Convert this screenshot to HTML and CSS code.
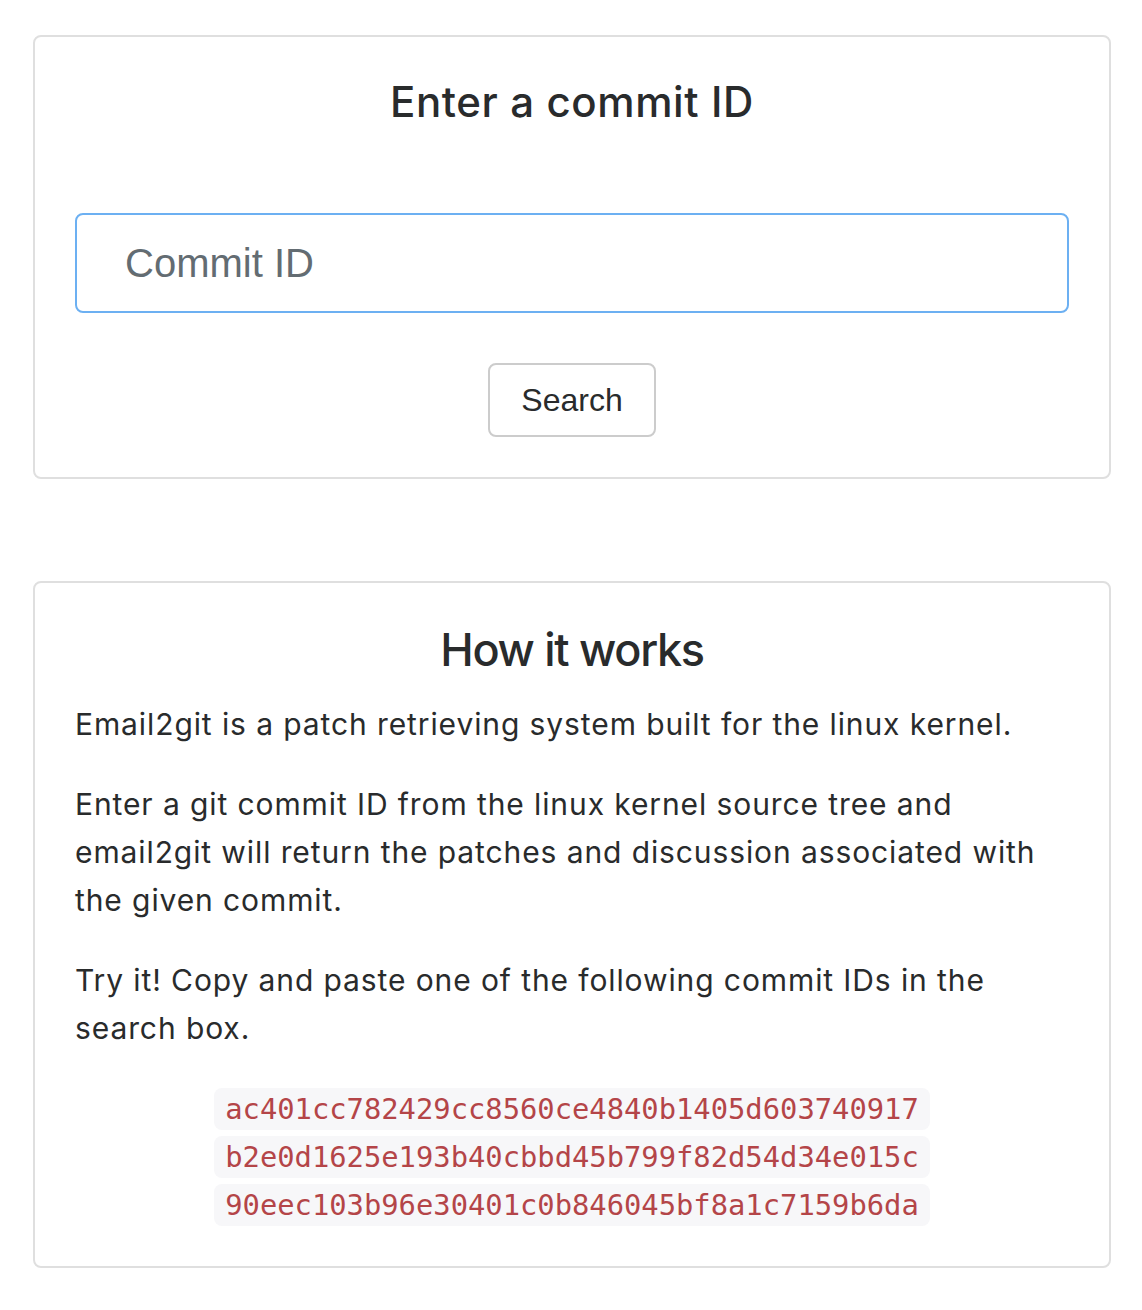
FILE: index.html
```html
<!DOCTYPE html>
<html>
<head>
<meta charset="utf-8">
<title>Email2git</title>
<link rel="stylesheet" href="styles.css">
</head>
<body>
<div class="container">
  <div class="card">
    <h2 class="title-search">Enter a commit ID</h2>
    <form class="search-form">
      <input class="commit-input" type="text" placeholder="Commit ID">
      <button class="search-btn" type="button">Search</button>
    </form>
  </div>
  <div class="card card-info">
    <h2 class="title-info">How it works</h2>
    <p>Email2git is a patch retrieving system built for the linux kernel.</p>
    <p>Enter a git commit ID from the linux kernel source tree and email2git will return the patches and discussion associated with the given commit.</p>
    <p>Try it! Copy and paste one of the following commit IDs in the search box.</p>
    <div class="examples">
      <code>ac401cc782429cc8560ce4840b1405d603740917</code>
      <code>b2e0d1625e193b40cbbd45b799f82d54d34e015c</code>
      <code>90eec103b96e30401c0b846045bf8a1c7159b6da</code>
    </div>
  </div>
</div>
</body>
</html>
```
FILE: styles.css
```css
* { box-sizing: border-box; }
html, body { margin: 0; padding: 0; background: #fff; }
body {
  font-family: Inter, "Noto Sans", sans-serif;
  color: #292b2c;
}
.container {
  padding: 35px 31px 0 33px;
}
.card {
  border: 2px solid #dfdfdf;
  border-radius: 8px;
  padding: 40px 40px 40px 40px;
}
.card-info { margin-top: 102px; }
h2 {
  margin: 0;
  text-align: center;
  font-weight: 500;
}
.title-search {
  font-size: 42px;
  line-height: 50px;
  letter-spacing: 0.6px;
}
.title-info {
  font-size: 45px;
  line-height: 54px;
  letter-spacing: -1.3px;
}
.search-form {
  display: flex;
  flex-direction: column;
  align-items: center;
}
.commit-input {
  display: block;
  width: 100%;
  height: 100px;
  margin-top: 86px;
  border: 2px solid #6cb0f2;
  border-radius: 8px;
  padding: 0 48px;
  font-family: "Liberation Sans", Arial, sans-serif;
  font-size: 40px;
  color: #464a4c;
  outline: none;
}
.commit-input::placeholder { color: #636c72; opacity: 1; }
.search-btn {
  margin-top: 50px;
  height: 74px;
  padding: 0 31px;
  border: 2px solid #ccc;
  border-radius: 8px;
  background: #fff;
  font-family: "Liberation Sans", Arial, sans-serif;
  font-size: 32px;
  color: #292b2c;
}
.card-info p {
  margin: 0 0 32px 0;
  font-size: 30px;
  line-height: 48px;
  letter-spacing: 0.9px;
}
.card-info p:first-of-type { margin-top: 23px; }
.examples {
  display: flex;
  flex-direction: column;
  align-items: center;
  gap: 6px;
  padding-top: 4px;
}
.examples code {
  display: block;
  height: 42px;
  line-height: 42px;
  padding: 0 11px;
  border-radius: 8px;
  background: #f7f7f9;
  color: #b44548;
  font-family: "DejaVu Sans Mono", monospace;
  font-size: 28.8px;
}
```
